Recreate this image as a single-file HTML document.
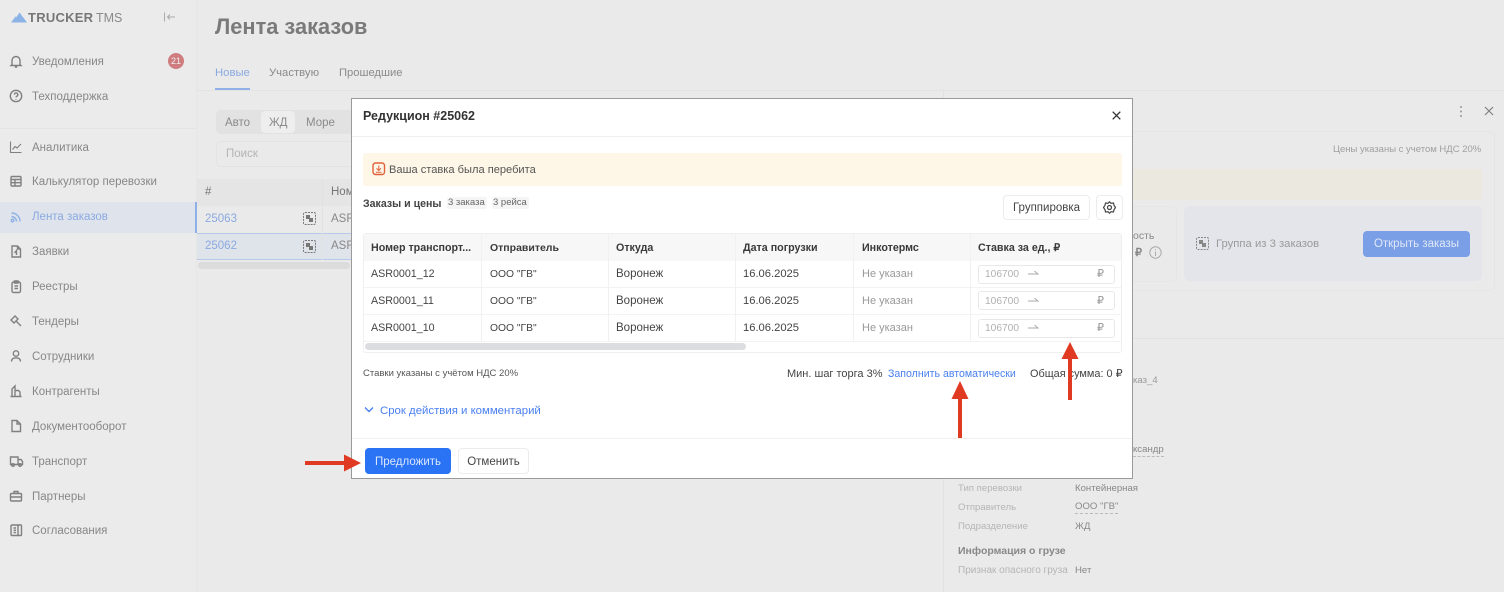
<!DOCTYPE html>
<html lang="ru"><head><meta charset="utf-8"><title>Лента заказов</title>
<style>
*{box-sizing:border-box}
html,body{margin:0;padding:0}
body{width:1504px;height:592px;position:relative;overflow:hidden;background:#eaeaea;font-family:"Liberation Sans",sans-serif;font-size:11.5px;color:#333}
#w{position:absolute;left:0;top:0;width:1504px;height:592px;filter:blur(.3px)}
.t{position:absolute;white-space:nowrap;line-height:14px;margin-top:1px}
.a{position:absolute}
.n{color:#878787;left:32px}
.b{font-weight:bold}
.l{color:#b0b0b0;font-size:10.2px;margin-top:2px}
.ic{position:absolute;fill:none;stroke:#808080;stroke-width:1.4}
.m{position:absolute;left:351px;top:98px;width:782px;height:381px;background:#fff;border:1px solid #9a9a9a}
.th{color:#3a3a3a;font-weight:bold;font-size:10.7px}
.c{color:#444;font-size:10.7px}
.o{color:#444;font-size:10.3px;margin-top:2px}
.u{color:#999;font-size:11px}
.s{font-size:9.6px}
.inp{position:absolute;left:978px;width:137px;height:19px;background:#fff;border:1px solid #e8e8e8;border-radius:3px}
</style></head><body><div id="w">

<!-- sidebar -->
<div class="a" style="left:0;top:0;width:197px;height:592px;background:#ebebeb;border-right:1px solid #e6e6e6"></div>
<svg class="a" style="left:11px;top:12px" width="16" height="11"><path d="M0 10.500L4.500 4.500L5.500 5L8.500 0.500L16 10.500Z" fill="#8db3e6"/></svg>
<div class="t b" style="left:28px;top:10px;font-size:13px;color:#777;letter-spacing:.25px">TRUCKER</div>
<div class="t" style="left:96px;top:10px;font-size:12.500px;color:#8a8a8a">TMS</div>
<svg class="ic" style="left:163px;top:11px;stroke-width:1" width="14" height="12"><path d="M1.500 1.500V10.500M12 6H4.500M7 3.500L4.500 6L7 8.500" stroke="#aaa"/></svg>

<svg class="ic" style="left:9px;top:54px" width="14" height="15"><path d="M3 10.500V6.500a4 4 0 0 1 8 0v4l1 1H2zM5.800 13h2.400"/></svg>
<div class="t n" style="top:54px">Уведомления</div>
<div class="a" style="left:168px;top:53px;width:16px;height:16px;border-radius:50%;background:#cf7c7f;color:#eee;font-size:9px;line-height:16px;text-align:center">21</div>
<svg class="ic" style="left:9px;top:89px" width="14" height="14"><circle cx="7" cy="7" r="5.700"/><path d="M5.400 5.600a1.700 1.700 0 1 1 2.400 1.600c-.6.3-.8.6-.8 1.200M7 10v.6"/></svg>
<div class="t n" style="top:89px">Техподдержка</div>
<div class="a" style="left:0;top:128px;width:196px;height:1px;background:#e4e4e4"></div>

<svg class="ic" style="left:9px;top:140px;stroke-width:1.100" width="14" height="14"><path d="M1.500 1.500V12.500H12.500M3.500 9.500L6 6.500L8 8L12 4"/></svg>
<div class="t n" style="top:140px">Аналитика</div>
<svg class="ic" style="left:9px;top:174px" width="14" height="14"><rect x="2" y="2.500" width="10" height="9.500" rx="1"/><path d="M2 5.500H12M2 8.700H12M6 5.500V12"/></svg>
<div class="t n" style="top:174px">Калькулятор перевозки</div>
<div class="a" style="left:0;top:202px;width:196px;height:31px;background:#dfe4ec"></div>
<div class="a" style="left:195px;top:202px;width:1.500px;height:31px;background:#8fb0e6"></div>
<svg class="ic" style="left:9px;top:210px;stroke:#8fb0e6" width="14" height="14"><circle cx="3.500" cy="10.500" r="1.300"/><path d="M2.500 6.500a5 5 0 0 1 5 5M2.500 3a8.500 8.500 0 0 1 8.500 8.500"/></svg>
<div class="t n" style="top:209px;color:#8aa9e0">Лента заказов</div>
<svg class="ic" style="left:9px;top:244px" width="14" height="15"><path d="M3 2H8.500L11.500 5V13H3zM8.500 2V5H11.500M5.500 9L7.500 6.500V11"/></svg>
<div class="t n" style="top:244px">Заявки</div>
<svg class="ic" style="left:9px;top:279px" width="14" height="15"><rect x="3" y="3" width="8.500" height="10.500" rx="1.500"/><path d="M5.500 2H9V4H5.500zM5.500 7H9M5.500 9.500H9"/></svg>
<div class="t n" style="top:279px">Реестры</div>
<svg class="ic" style="left:9px;top:314px" width="14" height="14"><path d="M2 6L6 2L9 5L5 9zM7 7L12 12"/></svg>
<div class="t n" style="top:314px">Тендеры</div>
<svg class="ic" style="left:9px;top:349px" width="14" height="14"><circle cx="7" cy="4.500" r="2.700"/><path d="M2.500 12.500c0-2.500 2-3.700 4.500-3.700s4.500 1.200 4.500 3.700"/></svg>
<div class="t n" style="top:349px">Сотрудники</div>
<svg class="ic" style="left:9px;top:384px" width="14" height="14"><path d="M1.500 12.500H12.500M3 12.500V5L6 2V12.500M6 6.500H9.500L11 8V12.500"/></svg>
<div class="t n" style="top:384px">Контрагенты</div>
<svg class="ic" style="left:9px;top:419px" width="14" height="14"><path d="M3 1.500H8L11.500 5V12.500H3zM8 1.500V5H11.500"/></svg>
<div class="t n" style="top:419px">Документооборот</div>
<svg class="ic" style="left:9px;top:454px" width="15" height="14"><path d="M1.500 3H9V10.500H1.500zM9 5.500H12L13.500 7.500V10.500H9"/><circle cx="4" cy="11" r="1.300"/><circle cx="11" cy="11" r="1.300"/></svg>
<div class="t n" style="top:454px">Транспорт</div>
<svg class="ic" style="left:9px;top:489px" width="14" height="14"><rect x="1.500" y="4.500" width="11" height="7.500" rx="1"/><path d="M5 4.500V2.500H9V4.500M1.500 8H12.500"/></svg>
<div class="t n" style="top:489px">Партнеры</div>
<svg class="ic" style="left:9px;top:523px" width="14" height="14"><rect x="2" y="2" width="10.500" height="10.500" rx="1"/><path d="M9 2V12.500M4.500 5H7M4.500 7.300H7M4.500 9.600H7"/></svg>
<div class="t n" style="top:523px">Согласования</div>

<!-- main -->
<div class="t b" style="left:215px;top:13px;font-size:21.800px;line-height:26px;color:#7a7a7a">Лента заказов</div>
<div class="t" style="left:215px;top:65px;color:#8aa9e0;font-size:11.300px">Новые</div>
<div class="t" style="left:269px;top:65px;color:#8a8a8a;font-size:11.300px">Участвую</div>
<div class="t" style="left:339px;top:65px;color:#8a8a8a;font-size:11.200px">Прошедшие</div>
<div class="a" style="left:215px;top:88px;width:35px;height:2px;background:#8fb0e6"></div>
<div class="a" style="left:197px;top:90px;width:1307px;height:1px;background:#e3e3e3"></div>

<div class="a" style="left:216px;top:110px;width:140px;height:24px;background:#e2e2e2;border-radius:5px"></div>
<div class="a" style="left:261px;top:111px;width:34px;height:22px;background:#eeeeee;border-radius:4px"></div>
<div class="t" style="left:225px;top:115px;color:#8a8a8a">Авто</div>
<div class="t" style="left:269px;top:115px;color:#8a8a8a">ЖД</div>
<div class="t" style="left:306px;top:115px;color:#8a8a8a">Море</div>
<div class="a" style="left:216px;top:141px;width:140px;height:26px;border:1px solid #e3e3e3;border-radius:5px"></div>
<div class="t" style="left:226px;top:146px;color:#b4b4b4">Поиск</div>

<div class="a" style="left:197px;top:179px;width:160px;height:27px;background:#e5e5e5"></div>
<div class="t" style="left:205px;top:184px;color:#777">#</div>
<div class="t" style="left:331px;top:184px;color:#777">Номер</div>
<div class="a" style="left:197px;top:233px;width:160px;height:27px;background:#dfe3ea;border-top:1px solid #b5c8e8;border-bottom:1px solid #b5c8e8"></div>
<div class="a" style="left:322px;top:179px;width:1px;height:81px;background:#e1e1e1"></div>
<div class="t" style="left:205px;top:211px;color:#8aa9e0">25063</div>
<div class="t" style="left:205px;top:238px;color:#8aa9e0">25062</div>
<div class="t" style="left:331px;top:211px;color:#888">ASR</div>
<div class="t" style="left:331px;top:238px;color:#888">ASR</div>
<svg class="a" style="left:303px;top:212px" width="13" height="13"><rect x=".5" y=".5" width="12" height="12" rx="1.500" fill="none" stroke="#777" stroke-dasharray="2 1"/><path d="M3 3H7V6H10V10H6V7H3Z" fill="#777"/></svg>
<svg class="a" style="left:303px;top:240px" width="13" height="13"><rect x=".5" y=".5" width="12" height="12" rx="1.500" fill="none" stroke="#777" stroke-dasharray="2 1"/><path d="M3 3H7V6H10V10H6V7H3Z" fill="#777"/></svg>
<div class="a" style="left:198px;top:262px;width:152px;height:7px;background:#dcdcdc;border-radius:4px"></div>

<!-- right panel -->
<div class="a" style="left:943px;top:90px;width:1px;height:502px;background:#e2e2e2"></div>
<svg class="a" style="left:1458px;top:105px" width="6" height="13"><g fill="#999"><circle cx="3" cy="2" r="1"/><circle cx="3" cy="6.500" r="1"/><circle cx="3" cy="11" r="1"/></g></svg>
<svg class="a" style="left:1484px;top:106px" width="10" height="10"><path d="M1 1L9 9M9 1L1 9" stroke="#808080" stroke-width="1.200"/></svg>
<div class="a" style="left:1000px;top:131px;width:495px;height:160px;border:1px solid #e5e5e5;border-radius:6px"></div>
<div class="t" style="left:1333px;top:142px;font-size:9.500px;color:#a0a0a0">Цены указаны с учетом НДС 20%</div>
<div class="a" style="left:1000px;top:169px;width:482px;height:31px;background:#ebe8df;border-radius:3px"></div>
<div class="a" style="left:1000px;top:206px;width:177px;height:76px;border:1px solid #e5e5e5;border-radius:5px"></div>
<div class="t" style="left:1133px;top:228px;font-size:10.500px;color:#888">ость</div>
<div class="t" style="left:1135px;top:245px;font-size:11px;color:#888;font-weight:bold">₽</div>
<svg class="a" style="left:1149px;top:246px" width="13" height="13"><circle cx="6.500" cy="6.500" r="5.700" fill="none" stroke="#aaa"/><path d="M6.500 5.500V10M6.500 3.300V4.300" stroke="#aaa"/></svg>
<div class="a" style="left:1184px;top:206px;width:298px;height:75px;background:#e3e5ea;border-radius:6px"></div>
<svg class="a" style="left:1196px;top:237px" width="13" height="13"><rect x=".5" y=".5" width="12" height="12" rx="1.500" fill="none" stroke="#888" stroke-dasharray="2 1"/><path d="M3 3H7V6H10V10H6V7H3Z" fill="#888"/></svg>
<div class="t" style="left:1216px;top:236px;color:#9a9a9a;font-size:11.300px">Группа из 3 заказов</div>
<div class="a" style="left:1363px;top:231px;width:107px;height:26px;background:#7a9fe6;border-radius:4px;color:#dfe8f8;text-align:center;line-height:27px">Открыть заказы</div>
<div class="a" style="left:943px;top:338px;width:561px;height:1px;background:#e2e2e2"></div>

<div class="t s" style="left:1133px;top:373px;color:#999">каз_4</div>
<div class="t s" style="left:1133px;top:443px;color:#888;border-bottom:1px dashed #bbb;line-height:12px">ксандр</div>
<div class="t s" style="left:958px;top:481px;color:#b5b5b5">Тип перевозки</div>
<div class="t s" style="left:1075px;top:481px;color:#888">Контейнерная</div>
<div class="t s" style="left:958px;top:500px;color:#b5b5b5">Отправитель</div>
<div class="t s" style="left:1075px;top:500px;color:#888;border-bottom:1px dashed #bbb;line-height:12px">ООО "ГВ"</div>
<div class="t s" style="left:958px;top:519px;color:#b5b5b5">Подразделение</div>
<div class="t s" style="left:1075px;top:519px;color:#888">ЖД</div>
<div class="t b" style="left:958px;top:543px;font-size:10.500px;color:#888">Информация о грузе</div>
<div class="t s" style="left:958px;top:563px;color:#b5b5b5;font-size:10px">Признак опасного груза</div>
<div class="t s" style="left:1075px;top:563px;color:#888">Нет</div>

<!-- modal -->
<div class="m"></div>
<div class="t b" style="left:363px;top:108px;font-size:12.500px;color:#333">Редукцион #25062</div>
<svg class="a" style="left:1112px;top:111px" width="9" height="9"><path d="M.7.7L8.300 8.300M8.300.7L.7 8.300" stroke="#333" stroke-width="1.300"/></svg>
<div class="a" style="left:352px;top:136px;width:780px;height:1px;background:#f0f0f0"></div>
<div class="a" style="left:363px;top:153px;width:759px;height:33px;background:#fef6e7;border-radius:3px"></div>
<svg class="a" style="left:372px;top:162px" width="14" height="14"><rect x="1" y="1" width="11.500" height="11.500" rx="2.500" fill="none" stroke="#e0603a" stroke-width="1.400"/><path d="M6.800 3.500V8.300M4.500 6.300L6.800 8.500L9 6.300M4 10.300H9.500" fill="none" stroke="#e0603a"/></svg>
<div class="t" style="left:389px;top:162px;color:#555;font-size:11.100px">Ваша ставка была перебита</div>
<div class="t b" style="left:363px;top:196px;font-size:10.600px;color:#444">Заказы и цены</div>
<div class="a" style="left:447px;top:197px;width:40px;height:12px;background:#f5f5f5;border-radius:2px"></div>
<div class="a" style="left:492px;top:197px;width:37px;height:12px;background:#f5f5f5;border-radius:2px"></div>
<div class="t" style="left:448px;top:195px;font-size:9.500px;color:#666">3 заказа</div>
<div class="t" style="left:493px;top:195px;font-size:9.500px;color:#666">3 рейса</div>
<div class="a" style="left:1003px;top:195px;width:87px;height:25px;border:1px solid #ececec;border-radius:4px;text-align:center;line-height:25px;color:#444">Группировка</div>
<div class="a" style="left:1096px;top:195px;width:27px;height:25px;border:1px solid #ececec;border-radius:4px"></div>
<svg class="a" style="left:1102px;top:200px" width="15" height="15"><path d="M7.500 1.800L9 3.300L11.500 3L12 5.300L13.500 7.500L12 9.700L11.500 12L9 11.700L7.500 13.200L6 11.700L3.500 12L3 9.700L1.500 7.500L3 5.300L3.500 3L6 3.300Z" fill="none" stroke="#444" stroke-width="1.200" stroke-linejoin="round"/><circle cx="7.500" cy="7.500" r="2" fill="none" stroke="#444" stroke-width="1.200"/></svg>

<div class="a" style="left:363px;top:233px;width:759px;height:120px;border:1px solid #efefef;border-radius:3px"></div>
<div class="a" style="left:364px;top:234px;width:757px;height:27px;background:#f7f7f7"></div>
<div class="a" style="left:364px;top:287px;width:757px;height:1px;background:#f3f3f3"></div>
<div class="a" style="left:364px;top:314px;width:757px;height:1px;background:#f3f3f3"></div>
<div class="a" style="left:364px;top:341px;width:757px;height:1px;background:#f3f3f3"></div>
<div class="a" style="left:481px;top:234px;width:1px;height:107px;background:#f1f1f1"></div>
<div class="a" style="left:608px;top:234px;width:1px;height:107px;background:#f1f1f1"></div>
<div class="a" style="left:735px;top:234px;width:1px;height:107px;background:#f1f1f1"></div>
<div class="a" style="left:853px;top:234px;width:1px;height:107px;background:#f1f1f1"></div>
<div class="a" style="left:970px;top:234px;width:1px;height:107px;background:#f1f1f1"></div>

<div class="t th" style="left:371px;top:240px">Номер транспорт...</div>
<div class="t th" style="left:490px;top:240px;font-size:10.500px">Отправитель</div>
<div class="t th" style="left:616px;top:240px">Откуда</div>
<div class="t th" style="left:743px;top:240px">Дата погрузки</div>
<div class="t th" style="left:862px;top:240px">Инкотермс</div>
<div class="t th" style="left:978px;top:240px">Ставка за ед., ₽</div>

<div class="t c" style="left:371px;top:266px">ASR0001_12</div>
<div class="t o" style="left:490px;top:266px">ООО "ГВ"</div>
<div class="t c" style="left:616px;top:266px;font-size:11.500px">Воронеж</div>
<div class="t c" style="left:743px;top:266px;font-size:11.200px">16.06.2025</div>
<div class="t u" style="left:862px;top:266px">Не указан</div>
<div class="inp" style="top:265px"></div>
<div class="t l" style="left:985px;top:266px">106700</div>
<svg class="a" style="left:1028px;top:270px" width="11" height="6"><path d="M0 4H10L6.500 1" fill="none" stroke="#aaa" stroke-width="1"/></svg>
<div class="t u" style="left:1097px;top:266px">₽</div>

<div class="t c" style="left:371px;top:293px">ASR0001_11</div>
<div class="t o" style="left:490px;top:293px">ООО "ГВ"</div>
<div class="t c" style="left:616px;top:293px;font-size:11.500px">Воронеж</div>
<div class="t c" style="left:743px;top:293px;font-size:11.200px">16.06.2025</div>
<div class="t u" style="left:862px;top:293px">Не указан</div>
<div class="inp" style="top:291px"></div>
<div class="t l" style="left:985px;top:293px">106700</div>
<svg class="a" style="left:1028px;top:297px" width="11" height="6"><path d="M0 4H10L6.500 1" fill="none" stroke="#aaa" stroke-width="1"/></svg>
<div class="t u" style="left:1097px;top:293px">₽</div>

<div class="t c" style="left:371px;top:320px">ASR0001_10</div>
<div class="t o" style="left:490px;top:320px">ООО "ГВ"</div>
<div class="t c" style="left:616px;top:320px;font-size:11.500px">Воронеж</div>
<div class="t c" style="left:743px;top:320px;font-size:11.200px">16.06.2025</div>
<div class="t u" style="left:862px;top:320px">Не указан</div>
<div class="inp" style="top:319px"></div>
<div class="t l" style="left:985px;top:320px">106700</div>
<svg class="a" style="left:1028px;top:324px" width="11" height="6"><path d="M0 4H10L6.500 1" fill="none" stroke="#aaa" stroke-width="1"/></svg>
<div class="t u" style="left:1097px;top:320px">₽</div>

<div class="a" style="left:365px;top:343px;width:381px;height:7px;background:#dcdde0;border-radius:4px"></div>

<div class="t" style="left:363px;top:366px;font-size:9.500px;color:#555">Ставки указаны с учётом НДС 20%</div>
<div class="t" style="left:787px;top:366px;font-size:11px;color:#444">Мин. шаг торга 3%</div>
<div class="t" style="left:888px;top:366px;font-size:10.600px;color:#4a80f0">Заполнить автоматически</div>
<div class="t" style="left:1030px;top:366px;font-size:10.900px;color:#444">Общая сумма: 0 ₽</div>
<svg class="a" style="left:364px;top:406px" width="10" height="8"><path d="M1 1.500L5 5.500L9 1.500" fill="none" stroke="#4a80f0" stroke-width="1.400"/></svg>
<div class="t" style="left:380px;top:403px;color:#4a80f0;font-size:11.400px">Срок действия и комментарий</div>
<div class="a" style="left:352px;top:438px;width:780px;height:1px;background:#f0f0f0"></div>
<div class="a" style="left:365px;top:448px;width:86px;height:26px;background:#2a73f5;border-radius:4px;color:#dbe7fd;text-align:center;line-height:28px">Предложить</div>
<div class="a" style="left:458px;top:448px;width:71px;height:26px;border:1px solid #ececec;border-radius:4px;text-align:center;line-height:26px;color:#444">Отменить</div>

<!-- arrows -->
<svg class="a" style="left:0;top:0" width="1504" height="592">
<g fill="#e03a22">
<rect x="305" y="461" width="40" height="4"/><path d="M344 454.500L361 463L344 471.500Z"/>
<rect x="958" y="398" width="4" height="40"/><path d="M951.500 399L960 381L968.500 399Z"/>
<rect x="1068" y="358" width="4" height="42"/><path d="M1061.500 359L1070 342L1078.500 359Z"/>
</g></svg>
</div></body></html>
